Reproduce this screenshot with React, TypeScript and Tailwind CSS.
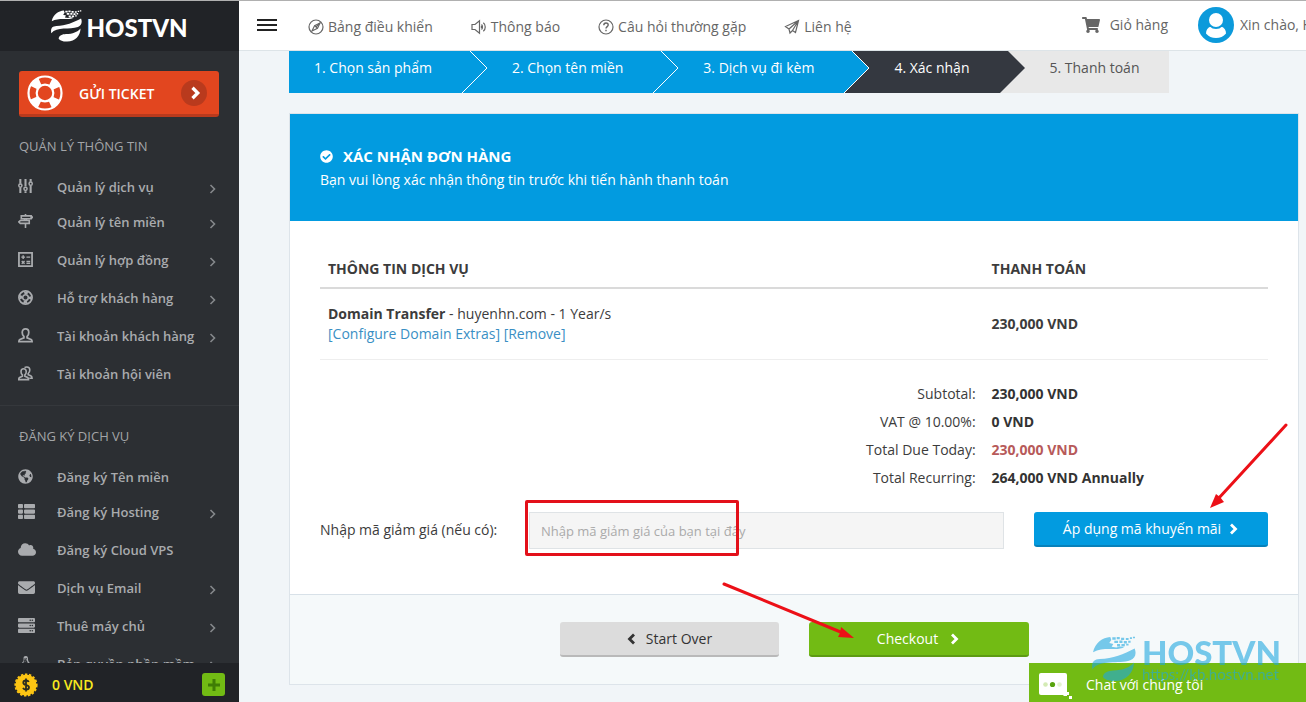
import React from 'react';
import {
  FaCheckCircle,
  FaCloud,
  FaEnvelope,
  FaGlobeAmericas,
  FaLinux,
  FaServer,
  FaShoppingCart,
  FaThList,
} from 'react-icons/fa';

interface IconProps {
  className?: string;
}

interface MenuEntry {
  label: string;
  icon: React.ReactNode;
  hasChildren?: boolean;
}

// ---- Icons ----

const LineIcon: React.FC<IconProps & { children: React.ReactNode }> = ({ className = 'h-[15px] w-[15px]', children }) => (
  <svg className={className} viewBox="0 0 16 16" fill="none" stroke="currentColor" strokeWidth="1.2" aria-hidden="true">
    {children}
  </svg>
);

const SlidersIcon = () => (
  <LineIcon>
    <path d="M2.5 0v5M2.5 9v6M8 0v8M8 13V15M13.500 0v3M13.500 7V15" strokeWidth="2.200" />
    <circle cx="2.500" cy="7" r="1.700" strokeWidth="1.600" />
    <circle cx="8" cy="10.500" r="1.700" strokeWidth="1.600" />
    <circle cx="13.500" cy="5" r="1.700" strokeWidth="1.600" />
  </LineIcon>
);

const SignpostIcon = () => (
  <LineIcon>
    <path d="M8 0v1.500M3.500 2h10.500v3H3.500zM2.500 7h9.500v3H2.500L.8 8.500zM14 2l1.300 1.500L14 5M7 5v2M9 5v2M8 10v5" strokeWidth="1.700" />
  </LineIcon>
);

const CalculatorIcon = () => (
  <LineIcon>
    <path d="M1 1h14v14H1z" strokeWidth="1.900" />
    <path d="M3.500 5.500h4M5.500 3.500v4M9 5.500h4M9 10h4M9 12h4M4 9.500l3 3M7 9.500l-3 3" strokeWidth="1.500" />
  </LineIcon>
);

const SupportIcon = () => (
  <LineIcon>
    <circle cx="8" cy="8" r="7" strokeWidth="1.900" />
    <circle cx="8" cy="8" r="3" strokeWidth="1.700" />
    <circle cx="8" cy="8" r="5" strokeWidth="2.500" strokeDasharray="3.900 3.950" strokeDashoffset="2" />
  </LineIcon>
);

const UserIcon = () => (
  <LineIcon>
    <path
      d="M8 1C5.800 1 4.500 2.500 4.500 4.800c0 1.900.7 3.400 1.800 4.300v1.400L2 12.300c-.8.4-1 1-1 2.200h14c0-1.200-.2-1.800-1-2.200l-4.300-1.800V9.100c1.100-.9 1.800-2.400 1.800-4.300C11.500 2.500 10.200 1 8 1z"
      strokeWidth="1.900"
    />
  </LineIcon>
);

const UsersIcon = () => (
  <LineIcon>
    <path d="M6 3C4.300 3 3.200 4.200 3.200 6c0 1.500.6 2.800 1.500 3.500v1.300l-3 1.400c-.7.4-.9 1-.9 2.300h10.400c0-1.300-.2-1.900-.9-2.300l-3-1.400V9.500C8.200 8.800 8.800 7.500 8.800 6 8.800 4.200 7.700 3 6 3z" strokeWidth="1.700" />
    <path d="M7 1.800C7.600 1.200 8.500 1 9.400 1c2 0 3.200 1.400 3.200 3.300 0 1.600-.7 2.900-1.700 3.700v1.200l2.700 1.200c1 .5 1.400 1.200 1.400 2.600h-3" strokeWidth="1.700" />
  </LineIcon>
);

const CompassIcon = () => (
  <LineIcon className="h-4 w-4">
    <circle cx="8" cy="8" r="7" />
    <path d="M12 4L9.500 9.200 4 12l2.600-5.400z" />
    <path d="M6.600 6.600l2.800 2.800M12 4L7.800 8.200" />
  </LineIcon>
);

const SpeakerIcon = () => (
  <LineIcon className="h-4 w-4">
    <path d="M1 5.500h3L8.500 1.800v12.400L4 10.500H1zM10.500 5.500c1.300 1.200 1.300 3.800 0 5M12.300 3.800c2.600 2 2.600 6.400 0 8.400M10 7.200c.6.400.6 1.200 0 1.600" />
  </LineIcon>
);

const QuestionIcon = () => (
  <LineIcon className="h-4 w-4">
    <circle cx="8" cy="8" r="7" />
    <path d="M5.800 6.200C5.800 4.900 6.700 4 8 4s2.200.9 2.200 2c0 1.600-2.200 1.700-2.200 3.600M8 10.800v1.400" strokeWidth="1.400" />
  </LineIcon>
);

const PaperPlaneIcon = () => (
  <LineIcon className="h-4 w-4">
    <path d="M14.500 1.500L1.500 7.500l3.500 2.500 1 4 2.500-2.500 3 2zM14.500 1.500L5 10M14.500 1.500L8.500 11.500" />
  </LineIcon>
);

const Chevron: React.FC<IconProps & { left?: boolean }> = ({ className = 'h-3 w-2.5', left }) => (
  <svg className={className} viewBox="0 0 10 12" fill="none" stroke="currentColor" strokeWidth="2.800" aria-hidden="true">
    <path d={left ? 'M8 1.500L3.500 6 8 10.500' : 'M2 1.500L6.500 6 2 10.500'} />
  </svg>
);

const LifebuoyIcon = () => (
  <svg className="h-9 w-9" viewBox="0 0 36 36" fill="none" stroke="currentColor" aria-hidden="true">
    <circle cx="18" cy="18" r="16.500" strokeWidth="2.200" />
    <circle cx="18" cy="18" r="8.300" strokeWidth="2.200" />
    <circle cx="18" cy="18" r="12.500" strokeWidth="8" strokeDasharray="8.600 11.035" strokeDashoffset="-5.500" />
  </svg>
);

const AvatarIcon = () => (
  <svg className="h-9 w-9 shrink-0" viewBox="0 0 36 36" aria-hidden="true">
    <circle cx="18" cy="18" r="18" fill="#0c9adb" />
    <path d="M12.500 19.500C9.500 21 8 23 8 26.500 10.500 29.500 14 31 18 31s7.500-1.500 10-4.500c0-3.500-1.500-5.500-4.500-7z" fill="#fff" />
    <circle cx="18" cy="13.300" r="8.800" fill="#0c9adb" />
    <circle cx="18" cy="13" r="7" fill="#fff" />
  </svg>
);

const CoinIcon = () => (
  <svg className="h-6 w-6" viewBox="0 0 24 24" aria-hidden="true">
    <circle cx="12" cy="12" r="10.500" fill="#fdc513" />
    <circle cx="12" cy="12" r="10.800" fill="none" stroke="#fdc513" strokeWidth="1.600" strokeDasharray="2.400 1.724" />
    <path d="M14.800 9C14.400 8 13.300 7.500 12 7.500c-1.600 0-2.700.9-2.700 2.200 0 3.200 5.700 1.500 5.700 4.600 0 1.400-1.200 2.300-2.900 2.300-1.500 0-2.500-.6-3.100-1.700M12 5.500v13" fill="none" stroke="#2b2d20" strokeWidth="1.800" />
  </svg>
);

const BrandMark: React.FC<IconProps> = ({ className }) => (
  <svg className={className} viewBox="0 0 130 132" fill="currentColor" aria-hidden="true">
    <path d="M3 46C9 18 31 3 54 1l3 9-6 9 12 3-5 8 14 2 10-3 14 1C78 45 38 27 3 46z" />
    <path d="M60 2h10v7H60zM73 1h9v7h-9zM86 3h9v7h-9zM100 4h8v6h-8zM112 2h6v5h-6zM121 0h6v5h-6zM66 12h11v7H66zM81 11h9v8h-9zM94 13h9v7h-9zM107 12h7v6h-7zM74 22h9v7h-9zM87 22h10v6H87zM101 21h7v5h-7z" />
    <path d="M1 96C-2 76 4 67 23 66c39-1 71-14 103-31 6 14 2 30-13 35-35 12-88-3-112 26z" />
    <path d="M32 119c2-13 15-18 31-19 29-2 47-8 61-24-1 30-22 54-56 55-17 1-29-4-36-12z" />
  </svg>
);

// ---- Data ----

const ACCOUNT_MENU: MenuEntry[] = [
  { label: 'Quản lý dịch vụ', icon: <SlidersIcon />, hasChildren: true },
  { label: 'Quản lý tên miền', icon: <SignpostIcon />, hasChildren: true },
  { label: 'Quản lý hợp đồng', icon: <CalculatorIcon />, hasChildren: true },
  { label: 'Hỗ trợ khách hàng', icon: <SupportIcon />, hasChildren: true },
  { label: 'Tài khoản khách hàng', icon: <UserIcon />, hasChildren: true },
  { label: 'Tài khoản hội viên', icon: <UsersIcon /> },
];

const SERVICE_MENU: MenuEntry[] = [
  { label: 'Đăng ký Tên miền', icon: <FaGlobeAmericas className="h-[15px] w-[15px]" /> },
  { label: 'Đăng ký Hosting', icon: <FaThList className="h-[17px] w-[17px]" />, hasChildren: true },
  { label: 'Đăng ký Cloud VPS', icon: <FaCloud className="h-[17px] w-[18px]" /> },
  { label: 'Dịch vụ Email', icon: <FaEnvelope className="h-[17px] w-[17px]" />, hasChildren: true },
  { label: 'Thuê máy chủ', icon: <FaServer className="h-[17px] w-[17px]" />, hasChildren: true },
  { label: 'Bản quyền phần mềm', icon: <FaLinux className="h-[15px] w-[15px]" />, hasChildren: true },
];

const NAV_LINKS = [
  { label: 'Bảng điều khiển', icon: <CompassIcon /> },
  { label: 'Thông báo', icon: <SpeakerIcon /> },
  { label: 'Câu hỏi thường gặp', icon: <QuestionIcon /> },
  { label: 'Liên hệ', icon: <PaperPlaneIcon /> },
];

const STEPS = [
  { label: '1. Chọn sản phẩm', color: 'z-50 bg-[#029be0] text-white', tip: '#029be0', line: '#ffffff' },
  { label: '2. Chọn tên miền', color: 'z-40 bg-[#029be0] text-white', tip: '#029be0', line: '#ffffff' },
  { label: '3. Dịch vụ đi kèm', color: 'z-30 bg-[#029be0] text-white', tip: '#029be0', line: '#ffffff' },
  { label: '4. Xác nhận', color: 'z-20 bg-[#343840] text-white', tip: '#343840', line: 'none' },
  { label: '5. Thanh toán', color: 'z-10 bg-[#e8e8e8] text-[#555]', tip: '', line: '' },
];

const TOTALS = [
  { label: 'Subtotal:', value: '230,000 VND', color: 'text-[#333]' },
  { label: 'VAT @ 10.00%:', value: '0 VND', color: 'text-[#333]' },
  { label: 'Total Due Today:', value: '230,000 VND', color: 'text-[#b75a5a]' },
  { label: 'Total Recurring:', value: '264,000 VND Annually', color: 'text-[#333]' },
];

// ---- Layout ----

const MenuSection: React.FC<{ title: string; items: MenuEntry[] }> = ({ title, items }) => (
  <section>
    <h2 className="px-[19px] text-[13px] leading-5 font-medium text-[#a3a5a8]">{title}</h2>
    <ul className="mt-4">
      {items.map(item => (
        <li key={item.label} className="first:*:h-8">
          <a href="#" className="flex h-[38px] items-center pr-[22px] pl-[18px] text-[13px] font-semibold whitespace-nowrap text-[#a9abae]">
            <span className="flex w-[39px] shrink-0 items-center pb-1">{item.icon}</span>
            <span className="flex-1">{item.label}</span>
            {item.hasChildren && (
              <svg className="mt-0.5 h-2.5 w-2 shrink-0" viewBox="0 0 8 10" fill="none" stroke="#85888b" strokeWidth="1.600">
                <path d="M1.500 1l4 4-4 4" />
              </svg>
            )}
          </a>
        </li>
      ))}
    </ul>
  </section>
);

const Sidebar = () => (
  <aside className="relative flex w-[239px] shrink-0 flex-col overflow-hidden bg-[#2c2f33]">
    <a href="#" className="flex h-[50px] shrink-0 items-center justify-center gap-1 bg-[#212327] text-white">
      <BrandMark className="h-8 w-[31px]" />
      <span className="pt-1 font-[Lato] text-2xl leading-8 font-black">HOSTVN</span>
    </a>

    <div className="min-h-0 flex-1 overflow-hidden">
      <div className="px-5 pt-5 pl-[19px]">
        <button type="button" className="flex h-[46px] w-full items-center rounded-[3px] border-b-[3px] border-[#b93a1d] bg-[#e2461f] px-2 text-white">
          <LifebuoyIcon />
          <span className="ml-4 pt-0.5 text-sm font-semibold">GỬI TICKET</span>
          <span className="mr-1 ml-auto flex h-[26px] w-[26px] items-center justify-center rounded-full bg-[#b93a1d]">
            <Chevron className="ml-1 h-3.5 w-3" />
          </span>
        </button>
      </div>
      <div className="mt-[19px]">
        <MenuSection title="QUẢN LÝ THÔNG TIN" items={ACCOUNT_MENU} />
      </div>
      <div className="mt-[11px] border-t border-[#35383c] pt-5">
        <MenuSection title="ĐĂNG KÝ DỊCH VỤ" items={SERVICE_MENU} />
      </div>
    </div>

    <div className="flex h-[39px] shrink-0 items-center bg-[#212327] pt-1 pr-3.5 pl-3.5">
      <CoinIcon />
      <span className="ml-3.5 text-sm font-semibold text-[#f8ea1f]">0 VND</span>
      <button type="button" aria-label="Nạp tiền" className="ml-auto flex h-[23px] w-[23px] items-center justify-center rounded-[3px] bg-[#72bb14] text-[#3f7d05]">
        <svg className="h-3 w-3" viewBox="0 0 12 12" stroke="currentColor" strokeWidth="3" aria-hidden="true">
          <path d="M6 0v12M0 6h12" />
        </svg>
      </button>
    </div>
  </aside>
);

const TopBar = () => (
  <header className="relative z-60 flex h-[50px] shrink-0 items-center border-b border-[#dde4e8] bg-white pl-[18px] text-sm whitespace-nowrap text-[#666]">
    <button type="button" aria-label="Menu" className="flex w-5 flex-col gap-[3px] pb-0.5">
      <span className="h-0.5 bg-[#222]" />
      <span className="h-0.5 bg-[#222]" />
      <span className="h-0.5 bg-[#222]" />
    </button>
    <nav className="ml-[31px] flex gap-[38px] pt-0.5">
      {NAV_LINKS.map(link => (
        <a key={link.label} href="#" className="flex items-center gap-1">
          {link.icon}
          {link.label}
        </a>
      ))}
    </nav>
    <a href="#" className="ml-auto flex items-center gap-2.5 pb-0.5">
      <FaShoppingCart className="h-[18px] w-[18px]" />
      Giỏ hàng
    </a>
    <a href="#" className="ml-[30px] flex items-center gap-1.5 pb-0.5">
      <AvatarIcon />
      <span className="w-[66px] overflow-hidden">Xin chào, Huyen</span>
    </a>
  </header>
);

const Steps = () => (
  <ol className="relative -mt-2 flex text-sm whitespace-nowrap">
    {STEPS.map(step => (
      <li key={step.label} className={`relative flex h-[50px] items-center pr-[30px] pl-[50px] first:pl-[25px] ${step.color}`}>
        {step.label}
        {step.tip && (
          <svg className="absolute top-0 left-full h-[50px] w-[26px]" viewBox="0 0 26 50" aria-hidden="true">
            <path d="M-1 0H0L25 25 0 50H-1z" fill={step.tip} />
            <path d="M0 0L25 25 0 50" fill="none" stroke={step.line} />
          </svg>
        )}
      </li>
    ))}
  </ol>
);

const ServiceTable = () => (
  <table className="w-full table-fixed text-left">
    <thead>
      <tr className="border-b-2 border-[#dadada]">
        <th className="w-[70%] px-2 py-2 font-bold">THÔNG TIN DỊCH VỤ</th>
        <th className="px-2 py-2 font-bold">THANH TOÁN</th>
      </tr>
    </thead>
    <tbody>
      <tr className="border-b border-[#eee]">
        <td className="px-2 py-[15px]">
          <strong className="font-bold">Domain Transfer</strong> - huyenhn.com - 1 Year/s
          <br />
          <a href="#" className="text-[#3a8fc4]">[Configure Domain Extras]</a>{' '}
          <a href="#" className="text-[#3a8fc4]">[Remove]</a>
        </td>
        <td className="px-2 font-bold">230,000 VND</td>
      </tr>
    </tbody>
  </table>
);

const PromoForm = () => (
  <div className="mt-5 flex items-start">
    <label htmlFor="promo" className="w-[209px] shrink-0 leading-[35px]">
      Nhập mã giảm giá (nếu có):
    </label>
    <div className="relative flex-1">
      <input
        id="promo"
        type="text"
        placeholder="Nhập mã giảm giá của bạn tại đây"
        className="h-[37px] w-full border border-[#dfe3e6] bg-[#f5f5f5] px-[11px] text-[13px] placeholder:text-[#aaa]"
      />
      {/* Highlight on the promo code field */}
      <span className="pointer-events-none absolute -top-3 -left-1 h-14 w-[214px] rounded-xs border-3 border-[#e3101a]" />
    </div>
    <div className="relative ml-[30px] w-[234px] shrink-0">
      <button type="button" className="flex h-[35px] w-full items-center justify-center gap-2 rounded-[3px] border-b-2 border-[#0781ba] bg-[#029be0] text-white">
        Áp dụng mã khuyến mãi
        <Chevron />
      </button>
      <svg className="pointer-events-none absolute -top-[89px] -right-5 h-[86px] w-20" viewBox="0 0 80 86" fill="#ec1017" aria-hidden="true">
        <path d="M78 2L10 76" stroke="#ec1017" strokeWidth="3" strokeLinecap="round" />
        <path d="M2 85L8 71l4 3 4 5z" />
      </svg>
    </div>
  </div>
);

const OrderCard = () => (
  <div className="mt-5 border border-[#dde4ea] bg-white text-[#3c3c3c]">
    <div className="h-[107px] bg-[#029be0] px-[30px] pt-[31px] text-white">
      <h1 className="flex items-center gap-2.5 text-[15px] leading-[22px] font-bold">
        <FaCheckCircle className="h-[13px] w-[13px]" />
        XÁC NHẬN ĐƠN HÀNG
      </h1>
      <p className="pt-[3px] text-sm">Bạn vui lòng xác nhận thông tin trước khi tiến hành thanh toán</p>
    </div>

    <div className="px-[30px] pt-[30px] pb-[45px] text-sm">
      <ServiceTable />
      <dl className="mt-5">
        {TOTALS.map(row => (
          <div key={row.label} className="flex leading-7">
            <dt className="w-[70%] pr-2 text-right">{row.label}</dt>
            <dd className={`pl-2 font-bold ${row.color}`}>{row.value}</dd>
          </div>
        ))}
      </dl>
      <PromoForm />
    </div>

    <div className="flex justify-center gap-[30px] border-t border-[#d8e1e8] bg-[#f5f9fa] py-[27px] text-sm">
      <button type="button" className="flex h-[35px] w-[219px] items-center justify-center gap-2.5 rounded-[3px] border-b-2 border-[#b9b9b9] bg-[#dcdcdc] text-[#333]">
        <Chevron left />
        Start Over
      </button>
      <div className="relative w-[220px]">
        <button type="button" className="flex h-[35px] w-full items-center justify-center gap-3 rounded-[3px] border-b-2 border-[#5d9b12] bg-[#72bb14] text-white">
          Checkout
          <Chevron />
        </button>
        <svg className="pointer-events-none absolute -top-[41px] -left-[88px] h-[59px] w-[136px]" viewBox="0 0 136 59" fill="#ec1017" aria-hidden="true">
          <path d="M3 3L122 52" stroke="#ec1017" strokeWidth="3" strokeLinecap="round" />
          <path d="M133 57L117 56l2-4 1-6z" />
        </svg>
      </div>
    </div>
  </div>
);

const ChatWidget = () => (
  <>
    <button type="button" className="fixed right-0 bottom-0 z-70 flex h-[39px] w-[277px] items-center bg-[#72bb14] pt-1 pl-2.5 text-sm text-white">
      <svg className="h-7 w-[34px]" viewBox="0 0 34 28" aria-hidden="true">
        <rect width="28" height="22" y="2" rx="2" fill="#fff" />
        <path d="M22 22h6v3h-3zM27 21h3v3h-3zM30 25h3v3h-3z" fill="#fff" />
        <circle cx="6.500" cy="13.500" r="2.300" fill="#d4ebb5" />
        <circle cx="13.500" cy="13.500" r="2.600" fill="#58a30d" />
        <circle cx="20.500" cy="13.500" r="2.300" fill="#e3f2cf" />
      </svg>
      <span className="ml-[13px]">Chat với chúng tôi</span>
    </button>
    <div className="pointer-events-none fixed right-[25px] bottom-5 z-80 flex gap-1.5 text-[#20a7e0] opacity-60">
      <BrandMark className="h-[46px] w-11" />
      <div className="font-[Lato] whitespace-nowrap">
        <p className="text-[33px] leading-8 font-black">HOSTVN</p>
        <p className="text-[15px] leading-3">https://kb.hostvn.net</p>
      </div>
    </div>
  </>
);

const App: React.FC = () => (
  <div className="flex h-screen overflow-hidden border-t border-[#b0b0b0] bg-[#f1f5f8] font-['Open_Sans','Noto_Sans',sans-serif]">
    <Sidebar />
    <div className="flex min-w-0 flex-1 flex-col">
      <TopBar />
      <main className="min-h-0 flex-1 overflow-hidden pr-[7px] pl-[50px]">
        <Steps />
        <OrderCard />
      </main>
    </div>
    <ChatWidget />
  </div>
);

export default App;
